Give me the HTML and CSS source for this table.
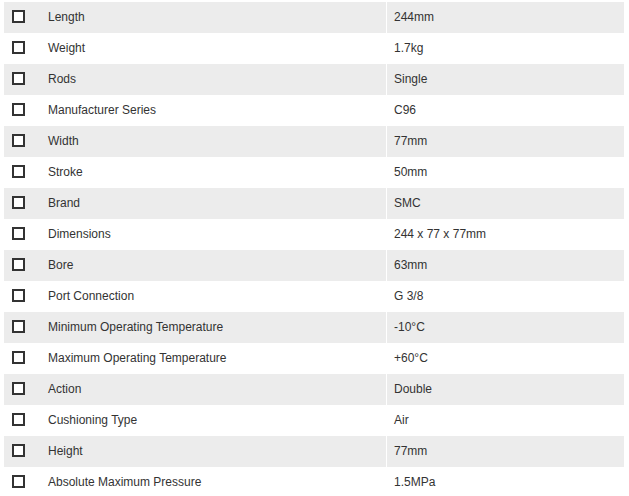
FILE: index.html
```html
<!DOCTYPE html>
<html>
<head>
<meta charset="utf-8">
<link rel="stylesheet" href="styles.css">
</head>
<body>
<div class="specs">
  <div class="row"><div class="name"><span class="box"></span>Length</div><div class="val">244mm</div></div>
  <div class="row"><div class="name"><span class="box"></span>Weight</div><div class="val">1.7kg</div></div>
  <div class="row"><div class="name"><span class="box"></span>Rods</div><div class="val">Single</div></div>
  <div class="row"><div class="name"><span class="box"></span>Manufacturer Series</div><div class="val">C96</div></div>
  <div class="row"><div class="name"><span class="box"></span>Width</div><div class="val">77mm</div></div>
  <div class="row"><div class="name"><span class="box"></span>Stroke</div><div class="val">50mm</div></div>
  <div class="row"><div class="name"><span class="box"></span>Brand</div><div class="val">SMC</div></div>
  <div class="row"><div class="name"><span class="box"></span>Dimensions</div><div class="val">244 x 77 x 77mm</div></div>
  <div class="row"><div class="name"><span class="box"></span>Bore</div><div class="val">63mm</div></div>
  <div class="row"><div class="name"><span class="box"></span>Port Connection</div><div class="val">G 3/8</div></div>
  <div class="row"><div class="name"><span class="box"></span>Minimum Operating Temperature</div><div class="val">-10°C</div></div>
  <div class="row"><div class="name"><span class="box"></span>Maximum Operating Temperature</div><div class="val">+60°C</div></div>
  <div class="row"><div class="name"><span class="box"></span>Action</div><div class="val">Double</div></div>
  <div class="row"><div class="name"><span class="box"></span>Cushioning Type</div><div class="val">Air</div></div>
  <div class="row"><div class="name"><span class="box"></span>Height</div><div class="val">77mm</div></div>
  <div class="row"><div class="name"><span class="box"></span>Absolute Maximum Pressure</div><div class="val">1.5MPa</div></div>
</div>
</body>
</html>
```
FILE: styles.css
```css
html, body {
  margin: 0;
  padding: 0;
  background: #fff;
}
body {
  font-family: "Liberation Sans", Arial, sans-serif;
  font-size: 12px;
  color: #333;
}
.specs {
  width: 620px;
  padding: 2px 0 0 4px;
}
.row {
  display: grid;
  grid-template-columns: 382px 1fr;
  column-gap: 1px;
  height: 31px;
}
.row:nth-child(odd) .name,
.row:nth-child(odd) .val {
  background: #ececec;
}
.name, .val {
  display: flex;
  align-items: center;
  line-height: 14px;
  padding-bottom: 2px;
  box-sizing: border-box;
}
.name {
  padding-left: 8px;
}
.val {
  padding-left: 7px;
}
.box {
  width: 9px;
  height: 9px;
  border: 2px solid #333;
  background: #fff;
  margin-right: 23px;
  flex: none;
}
```
